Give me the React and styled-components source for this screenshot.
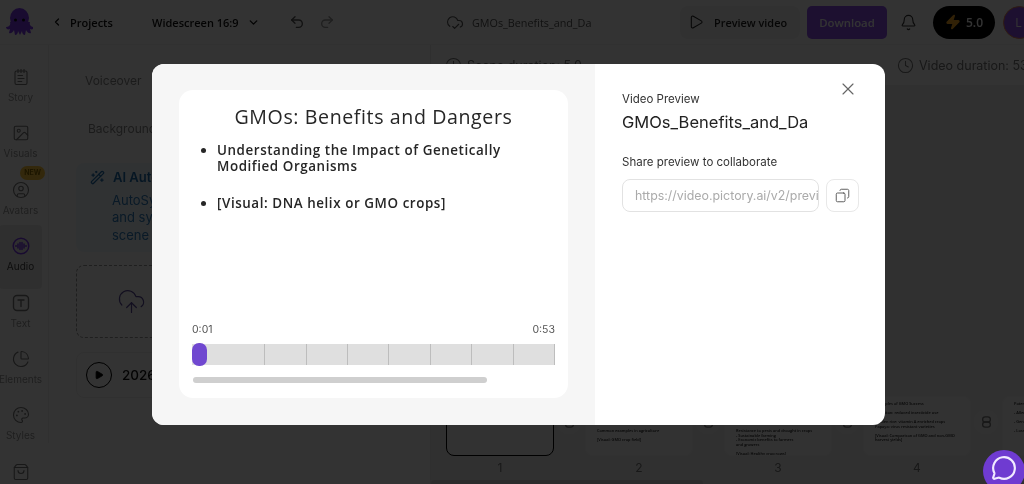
import React from "react";
import styled, { createGlobalStyle } from "styled-components";
import {
  ChevronLeft,
  ChevronDown,
  Undo2,
  Redo2,
  CloudCheck,
  Play,
  Bell,
  Zap,
  NotepadText,
  Image,
  CircleUser,
  ChartPie,
  Palette,
  ShoppingBag,
  Clock,
  X,
  Copy,
  MessageCircle,
  WandSparkles,
  CloudUpload,
} from "lucide-react";

const GlobalStyle = createGlobalStyle`
  html, body {
    margin: 0;
    padding: 0;
    height: 100%;
    overflow: hidden;
    background: #fff;
  }
  * {
    box-sizing: border-box;
  }
`;

const Page = styled.div`
  position: relative;
  width: 1024px;
  height: 484px;
  overflow: hidden;
  font-family: Inter, "Liberation Sans", sans-serif;
  filter: blur(0.35px);
`;

const Editor = styled.div`
  display: flex;
  flex-direction: column;
  height: 100%;
  background: #fff;
  color: #000;
`;

const TopBar = styled.header`
  display: flex;
  align-items: center;
  flex: 0 0 45px;
  height: 45px;
  padding-left: 6px;
  border-bottom: 1px solid #f2f2f2;
  font-family: "Open Sans", "Noto Sans", sans-serif;
  white-space: nowrap;

  > * {
    flex-shrink: 0;
  }
`;

const Logo = styled.svg`
  width: 27px;
  height: 28px;
  margin-right: 18px;
`;

const TopLink = styled.span`
  display: flex;
  align-items: center;
  font-size: 11px;
  font-weight: 600;
  color: #111;
`;

const Projects = styled(TopLink)`
  gap: 7px;
  width: 101px;
`;

const Format = styled(TopLink)`
  gap: 8px;
  width: 137px;
`;

const History = styled.div`
  display: flex;
  gap: 14px;
  width: 157px;
  color: #555;
`;

const FileName = styled.div`
  display: flex;
  align-items: center;
  gap: 8px;
  width: 234px;
  font-size: 10.8px;
  color: #555;
`;

const PreviewButton = styled.div`
  display: flex;
  align-items: center;
  gap: 10px;
  width: 120px;
  height: 33px;
  padding-left: 8px;
  margin-right: 7px;
  border-radius: 8px;
  background: #f4f4f4;
  font-size: 10.9px;
  font-weight: 600;
  color: #222;
`;

const DownloadButton = styled.div`
  display: flex;
  align-items: center;
  justify-content: center;
  width: 80px;
  height: 33px;
  margin-right: 13px;
  border-radius: 5px;
  background: #8f52f0;
  font-size: 11.4px;
  font-weight: 600;
  color: #fff;
`;

const BellSlot = styled.div`
  display: flex;
  width: 33px;
  color: #333;
`;

const CreditPill = styled.div`
  display: flex;
  align-items: center;
  justify-content: center;
  gap: 5px;
  width: 62px;
  height: 33px;
  margin-right: 8px;
  border-radius: 17px;
  background: #000;
  font-size: 12px;
  font-weight: 600;
  color: #fff;
`;

const Avatar = styled.div`
  display: flex;
  flex: 0 0 33px;
  align-items: center;
  justify-content: center;
  height: 33px;
  padding-right: 2px;
  border: 1px solid #e8895a;
  border-radius: 50%;
  background: #8f52f0;
  font-size: 12px;
  color: #fff;
`;

const Body = styled.div`
  display: flex;
  flex: 1;
  min-height: 0;
`;

const SideNav = styled.nav`
  flex: 0 0 49px;
  height: 398px;
  padding-top: 20px;
  border-right: 1px solid #f0f0f0;
  isolation: isolate;
`;

const NavItem = styled.div`
  position: relative;
  display: flex;
  flex-direction: column;
  align-items: center;
  width: 43px;
  height: 56.4px;
  margin-left: -1px;
  font-size: 10px;
  line-height: 12px;
  white-space: nowrap;
  color: ${(p) => (p.$active ? "#444" : "#9a9a9a")};

  svg {
    margin-top: 3px;
    margin-bottom: 5px;
    color: ${(p) => (p.$active ? "#7c3aed" : "#777")};
  }
`;

const ActiveBack = styled.span`
  position: absolute;
  inset: -9px 0 2px 0;
  z-index: -1;
  border-radius: 4px;
  background: #ececec;
`;

const NewBadge = styled.span`
  position: absolute;
  top: -12px;
  right: -3px;
  padding: 1px 4px;
  border-radius: 7px;
  background: #ffc93c;
  font-size: 7px;
  font-weight: 700;
  line-height: 12px;
  color: #8c6a00;
`;

const Panel = styled.section`
  display: flex;
  flex-direction: column;
  flex: 0 0 382px;
  padding: 27px 15px 0 27px;
  border-right: 1px solid #ececec;
`;

const TabLabel = styled.div`
  margin-left: ${(p) => p.$indent}px;
  height: ${(p) => p.$height}px;
  font-size: 12px;
  line-height: 18px;
  color: #888;
`;

const SyncCard = styled.div`
  height: 89px;
  padding: 6px 14px;
  border-radius: 8px;
  background: #f1f8fd;
  font-size: 13px;
  line-height: 17.5px;
  color: #2f7fc0;
`;

const SyncTitle = styled.div`
  display: flex;
  align-items: center;
  gap: 8px;
  margin-bottom: 5px;
  font-weight: 600;
  color: #1f6fb0;
`;

const SyncText = styled.div`
  padding-left: 22px;
`;

const UploadBox = styled.div`
  display: flex;
  align-items: center;
  height: 73px;
  margin-top: 13px;
  padding-left: 40px;
  border: 1px dashed #999;
  border-radius: 8px;
  color: #5a4a9a;
`;

const AudioRow = styled.div`
  display: flex;
  align-items: center;
  gap: 10px;
  height: 46px;
  margin-top: 14px;
  padding-left: 9px;
  border: 1px solid #f0f0f0;
  border-radius: 8px;
  font-size: 13.5px;
  font-weight: 500;
  color: #111;
`;

const PlayRing = styled.span`
  display: flex;
  align-items: center;
  justify-content: center;
  width: 26px;
  height: 26px;
  border: 1.5px solid #000;
  border-radius: 50%;
`;

const Stage = styled.main`
  display: flex;
  flex-direction: column;
  flex: 1;
  min-width: 0;
  background: #f1f1f1;
`;

const StageBar = styled.div`
  display: flex;
  align-items: center;
  justify-content: space-between;
  flex: 0 0 40px;
  padding-left: 14px;
  background: #fff;
  font-size: 12.5px;
  color: #777;
  white-space: nowrap;

  svg {
    flex-shrink: 0;
  }
`;

const Duration = styled.span`
  display: flex;
  align-items: center;
  gap: 5px;
`;

const VideoDuration = styled(Duration)`
  width: 127px;
  overflow: hidden;
`;

const StageSpace = styled.div`
  flex: 1;
`;

const Thumbs = styled.div`
  display: flex;
  flex: 0 0 84px;
  padding-left: 15px;
`;

const ThumbCell = styled.div`
  display: grid;
  grid-template-columns: 108px 31px;
  grid-template-rows: 60px 24px;
  flex: 0 0 139px;
`;

const ThumbCard = styled.div`
  height: 60px;
  padding: 5px 11px;
  overflow: hidden;
  border: ${(p) => (p.$selected ? "1.5px solid #000" : "1px solid #f6f6f6")};
  border-radius: 8px;
  background: #fafafa;
  font-family: "Open Sans", "Noto Sans", sans-serif;
  font-size: 3.9px;
  line-height: 4.5px;
  font-weight: 600;
  white-space: nowrap;
  color: #222;
`;

const ThumbGap = styled.div`
  display: flex;
  align-items: center;
  justify-content: center;
  width: 24px;
  height: 24px;
  margin: 14px 0 0 3px;
  border-radius: 50%;
  background: #f6f6f6;
  color: #777;
`;

const ThumbNumber = styled.div`
  grid-column: 1;
  padding-top: 5px;
  font-size: 12px;
  line-height: 14px;
  text-align: center;
  color: #777;
`;

const StageScroll = styled.div`
  flex: 0 0 4px;
  width: 272px;
  border-radius: 3px 3px 0 0;
  background: #dcdcdc;
`;

const Overlay = styled.div`
  position: absolute;
  inset: 0;
  padding: 64px 0 0 152px;
  background: rgba(0, 0, 0, 0.8);
`;

const Modal = styled.div`
  display: flex;
  width: 733px;
  height: 361px;
  overflow: hidden;
  border-radius: 12px;
  background: #fff;
`;

const PlayerSide = styled.div`
  flex: 0 0 443px;
  padding: 26px 27px 27px;
  background: #f6f6f6;
`;

const PlayerCard = styled.div`
  display: flex;
  flex-direction: column;
  width: 389px;
  height: 308px;
  padding: 0 13px;
  border-radius: 14px;
  background: #fff;
`;

const Slide = styled.div`
  flex: 1;
  font-family: "Open Sans", "Noto Sans", sans-serif;
  color: #262626;
`;

const SlideTitle = styled.h1`
  margin: 16px 0 14px;
  font-size: 19.6px;
  font-weight: 500;
  line-height: 22px;
  letter-spacing: 0.6px;
  text-align: center;
`;

const Bullets = styled.ul`
  margin: 0;
  padding: 0 0 0 25px;
  font-size: 13.4px;
  font-weight: 600;
  line-height: 16px;
  letter-spacing: 0.57px;
`;

const Bullet = styled.li`
  margin-bottom: 21px;
`;

const Times = styled.div`
  display: flex;
  justify-content: space-between;
  margin-bottom: 8px;
  font-size: 10.5px;
  line-height: 13px;
  color: #555;
`;

const Track = styled.div`
  position: relative;
  display: grid;
  grid-template-columns: repeat(8, 41.4px);
  justify-content: end;
  height: 21px;
  background: #dfdfdf;
`;

const TrackSlot = styled.span`
  border-right: 1.5px solid #bdbdbd;
`;

const Handle = styled.span`
  position: absolute;
  left: 0;
  top: -1px;
  width: 15px;
  height: 23px;
  border-radius: 7px;
  background: #7048d0;
`;

const Scroll = styled.div`
  width: 294px;
  height: 6px;
  margin: 12px 0 15px 1px;
  border-radius: 3px;
  background: #cfcfcf;
`;

const InfoSide = styled.div`
  position: relative;
  flex: 1;
  padding: 28px 0 0 27px;
`;

const CloseButton = styled.span`
  position: absolute;
  top: 15px;
  right: 27px;
  display: flex;
  color: #666;
`;

const InfoLabel = styled.div`
  font-size: 11.5px;
  line-height: 15px;
  color: #333;
`;

const InfoTitle = styled.div`
  margin: 4px 0 22px;
  font-size: 16.5px;
  line-height: 22px;
  color: #222;
`;

const ShareRow = styled.div`
  display: flex;
  gap: 7px;
  margin-top: 9px;
`;

const ShareInput = styled.div`
  width: 197px;
  height: 33px;
  padding: 0 12px;
  overflow: hidden;
  border: 1px solid #e2e2e2;
  border-radius: 8px;
  font-size: 12.4px;
  line-height: 31px;
  white-space: nowrap;
  color: #aaa;
`;

const CopyButton = styled.div`
  display: flex;
  align-items: center;
  justify-content: center;
  width: 33px;
  height: 33px;
  border: 1px solid #e8e8e8;
  border-radius: 8px;
  color: #555;

  svg {
    transform: scaleX(-1);
  }
`;

const ChatBubble = styled.div`
  position: absolute;
  left: 983px;
  top: 450px;
  display: flex;
  align-items: center;
  justify-content: center;
  width: 42px;
  height: 42px;
  padding-bottom: 6px;
  border-radius: 50%;
  background: #6f3bd1;
  color: #f1eaff;
`;

function AudioIcon(props) {
  return (
    <svg width={props.size} height={props.size} viewBox="0 0 18 18" fill="none" stroke="currentColor" strokeWidth="1.5">
      <circle cx="9" cy="9" r="7.8" />
      <path d="M3.5 9h1M6 7v4M8 5.5v7M10 5.5v7M12 7v4M13.5 9h1" strokeLinecap="round" />
    </svg>
  );
}

function TextIcon(props) {
  return (
    <svg width={props.size} height={props.size} viewBox="0 0 18 18" fill="none" stroke="currentColor" strokeWidth="1.4">
      <rect x="1.5" y="1.5" width="15" height="15" rx="3.5" />
      <path d="M6 6h6M9 6v6.5" strokeLinecap="round" />
    </svg>
  );
}

const navItems = [
  { label: "Story", Icon: NotepadText },
  { label: "Visuals", Icon: Image },
  { label: "Avatars", Icon: CircleUser, badge: true },
  { label: "Audio", Icon: AudioIcon, active: true },
  { label: "Text", Icon: TextIcon },
  { label: "Elements", Icon: ChartPie },
  { label: "Styles", Icon: Palette },
  { label: "Brand", Icon: ShoppingBag },
];

const thumbs = [
  { n: 1, selected: true, lines: ["GMOs: Benefits and Dangers"] },
  {
    n: 2,
    lines: [
      "What are GMOs?",
      "",
      "Definition of genetically modified organisms",
      "",
      "Techniques used in genetic modification",
      "",
      "Common examples in agriculture",
      "",
      "[Visual: GMO crop field]",
    ],
  },
  {
    n: 3,
    lines: [
      "Benefits of GMOs",
      "",
      "Higher crop yields, less pesticide use",
      "",
      "Improved nutrition and longer shelf life",
      "",
      "Resistance to pests and drought in crops",
      "- Sustainable farming",
      "- Economic benefits to farmers",
      "and growers",
      "",
      "[Visual: Healthy crop rows]",
    ],
  },
  {
    n: 4,
    lines: [
      "Examples of GMO Success",
      "",
      "Bt cotton: reduced insecticide use",
      "",
      "Golden rice: vitamin A enriched crops",
      "Papaya: virus resistant varieties",
      "",
      "[Visual: Comparison of GMO and non-GMO",
      "harvest yields]",
    ],
  },
  {
    n: 5,
    lines: ["Potential Dangers", "", "- Allergic reactions", "", "- Gene transfer", "", "- Loss of biodiversity"],
  },
];

function OctopusLogo() {
  return (
    <Logo viewBox="0 0 27 28">
      <ellipse cx="13.5" cy="10" rx="9.5" ry="10" fill="#7c3aed" />
      <path
        d="M4 14c1 3-1 5-4 5 0 2 2 3 4 2l-1 4c2 1 4-1 5-3l1 5c2 0 3-2 3-4l2 4 2-4c0 2 1 4 3 4l1-5c1 2 3 4 5 3l-1-4c2 1 4 0 4-2-3 0-5-2-4-5z"
        fill="#7c3aed"
      />
      <circle cx="9.5" cy="12" r="1.5" fill="#111" />
      <circle cx="17.5" cy="12" r="1.5" fill="#111" />
    </Logo>
  );
}

function LinkGlyph() {
  return (
    <svg width="11" height="12" viewBox="0 0 12 14" fill="none" stroke="currentColor" strokeWidth="1.5">
      <rect x="1.5" y="1" width="9" height="6" rx="3" />
      <rect x="1.5" y="7" width="9" height="6" rx="3" />
    </svg>
  );
}

function EditorBackground() {
  return (
    <Editor>
      <TopBar>
        <OctopusLogo />
        <Projects>
          <ChevronLeft size={12} strokeWidth={2.5} />
          Projects
        </Projects>
        <Format>
          Widescreen 16:9
          <ChevronDown size={13} strokeWidth={2.5} />
        </Format>
        <History>
          <Undo2 size={16} />
          <Redo2 size={16} color="#999" />
        </History>
        <FileName>
          <CloudCheck size={18} strokeWidth={1.5} />
          GMOs_Benefits_and_Da
        </FileName>
        <PreviewButton>
          <Play size={16} strokeWidth={1.6} />
          Preview video
        </PreviewButton>
        <DownloadButton>Download</DownloadButton>
        <BellSlot>
          <Bell size={17} strokeWidth={1.6} />
        </BellSlot>
        <CreditPill>
          <Zap size={16} fill="#f5a623" color="#f5a623" />
          5.0
        </CreditPill>
        <Avatar>L</Avatar>
      </TopBar>
      <Body>
        <SideNav>
          {navItems.map(({ label, Icon, active, badge }) => (
            <NavItem key={label} $active={active}>
              {active && <ActiveBack />}
              {badge && <NewBadge>NEW</NewBadge>}
              <Icon size={18} strokeWidth={1.5} />
              {label}
            </NavItem>
          ))}
        </SideNav>
        <Panel>
          <TabLabel $indent={9} $height={48}>
            Voiceover
          </TabLabel>
          <TabLabel $indent={12} $height={43}>
            Background music
          </TabLabel>
          <SyncCard>
            <SyncTitle>
              <WandSparkles size={15} />
              AI AutoSync
            </SyncTitle>
            <SyncText>
              AutoSync your voiceover with the text
              <br />
              and sync the audio across every scene
              <br />
              scene in one click
            </SyncText>
          </SyncCard>
          <UploadBox>
            <CloudUpload size={29} strokeWidth={1} />
          </UploadBox>
          <AudioRow>
            <PlayRing>
              <Play size={10} fill="#000" />
            </PlayRing>
            2026-voiceover.mp3
          </AudioRow>
        </Panel>
        <Stage>
          <StageBar>
            <Duration>
              <Clock size={17} strokeWidth={1.5} />
              Scene duration: 5.0
            </Duration>
            <VideoDuration>
              <Clock size={17} strokeWidth={1.5} />
              Video duration: 53.9
            </VideoDuration>
          </StageBar>
          <StageSpace />
          <Thumbs>
            {thumbs.map((t) => (
              <ThumbCell key={t.n}>
                <ThumbCard $selected={t.selected}>
                  {t.lines.map((line, i) => (
                    <div key={i}>{line || "\u00a0"}</div>
                  ))}
                </ThumbCard>
                <ThumbGap>
                  <LinkGlyph />
                </ThumbGap>
                <ThumbNumber>{t.n}</ThumbNumber>
              </ThumbCell>
            ))}
          </Thumbs>
          <StageScroll />
        </Stage>
      </Body>
    </Editor>
  );
}

export default function App() {
  return (
    <Page>
      <GlobalStyle />
      <EditorBackground />
      <Overlay>
        <Modal>
          <PlayerSide>
            <PlayerCard>
              <Slide>
                <SlideTitle>GMOs: Benefits and Dangers</SlideTitle>
                <Bullets>
                  <Bullet>
                    Understanding the Impact of Genetically
                    <br />
                    Modified Organisms
                  </Bullet>
                  <Bullet>[Visual: DNA helix or GMO crops]</Bullet>
                </Bullets>
              </Slide>
              <Times>
                <span>0:01</span>
                <span>0:53</span>
              </Times>
              <Track>
                {Array.from({ length: 8 }, (_, i) => (
                  <TrackSlot key={i} />
                ))}
                <Handle />
              </Track>
              <Scroll />
            </PlayerCard>
          </PlayerSide>
          <InfoSide>
            <CloseButton>
              <X size={20} strokeWidth={1.4} />
            </CloseButton>
            <InfoLabel>Video Preview</InfoLabel>
            <InfoTitle>GMOs_Benefits_and_Da</InfoTitle>
            <InfoLabel>Share preview to collaborate</InfoLabel>
            <ShareRow>
              <ShareInput>https://video.pictory.ai/v2/preview/</ShareInput>
              <CopyButton>
                <Copy size={15} strokeWidth={1.5} />
              </CopyButton>
            </ShareRow>
          </InfoSide>
        </Modal>
      </Overlay>
      <ChatBubble>
        <MessageCircle size={26} strokeWidth={2} />
      </ChatBubble>
    </Page>
  );
}
